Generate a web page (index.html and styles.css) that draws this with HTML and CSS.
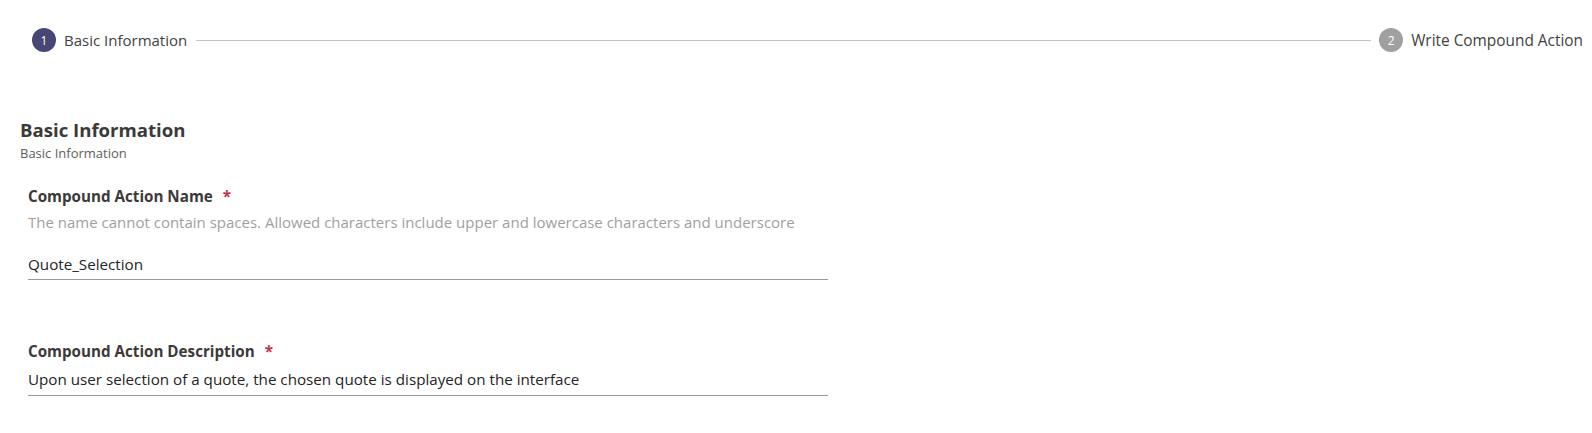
FILE: index.html
```html
<!DOCTYPE html>
<html>
<head>
<meta charset="utf-8">
<link rel="stylesheet" href="styles.css">
</head>
<body>
<div class="stepper">
  <div class="step active"><span class="num">1</span><span class="step-label">Basic Information</span></div>
  <div class="step-line"></div>
  <div class="step"><span class="num">2</span><span class="step-label">Write Compound Action</span></div>
</div>
<section class="section">
  <h2 class="section-title">Basic Information</h2>
  <div class="section-sub">Basic Information</div>
  <div class="field name-field">
    <label class="field-label">Compound Action Name <span class="req">*</span></label>
    <div class="field-help">The name cannot contain spaces. Allowed characters include upper and lowercase characters and underscore</div>
    <div class="field-input">Quote_Selection</div>
  </div>
  <div class="field desc-field">
    <label class="field-label">Compound Action Description <span class="req">*</span></label>
    <div class="field-input">Upon user selection of a quote, the chosen quote is displayed on the interface</div>
  </div>
</section>
</body>
</html>
```
FILE: styles.css
```css
html, body {
  margin: 0;
  padding: 0;
  background: #fff;
  font-family: "Open Sans", "Noto Sans", sans-serif;
  color: #323130;
}
.stepper {
  display: flex;
  align-items: center;
  padding: 28px 9px 0 32px;
}
.step {
  display: flex;
  align-items: center;
  gap: 8px;
}
.num {
  width: 24px;
  height: 24px;
  border-radius: 50%;
  background: #a0a0a0;
  color: #fff;
  font-size: 12px;
  display: flex;
  align-items: center;
  justify-content: center;
}
.step.active .num {
  background: #464775;
}
.step-label {
  font-size: 15px;
  color: #424242;
}
.step:last-child .step-label {
  font-size: 15.4px;
}
.step-line {
  flex: 1;
  height: 1px;
  background: #c4c4c4;
  margin: 0 8px 0 9px;
}
.section {
  padding: 0 0 0 20px;
  margin-top: 66px;
}
.section-title {
  margin: 0;
  font-size: 18.6px;
  font-weight: 700;
  line-height: 24px;
  color: #3b3a39;
}
.section-sub {
  font-size: 13px;
  color: #605e5c;
  line-height: 18px;
  margin-top: 2px;
}
.field {
  margin-left: 8px;
  width: 800px;
}
.name-field {
  margin-top: 24px;
}
.desc-field {
  margin-top: 61px;
}
.field-label {
  display: block;
  font-size: 15.2px;
  font-weight: 700;
  line-height: 20px;
  color: #3b3a39;
}
.req {
  color: #c4314b;
  margin-left: 6px;
}
.field-help {
  font-size: 15px;
  color: #a19f9d;
  line-height: 20px;
  margin-top: 6px;
}
.field-input {
  font-size: 15.2px;
  line-height: 20px;
  padding: 0 0 5px 0;
  border-bottom: 1px solid #999;
  color: #242424;
}
.name-field .field-input {
  margin-top: 22px;
}
.desc-field .field-input {
  margin-top: 8px;
  padding-bottom: 6px;
}
```
